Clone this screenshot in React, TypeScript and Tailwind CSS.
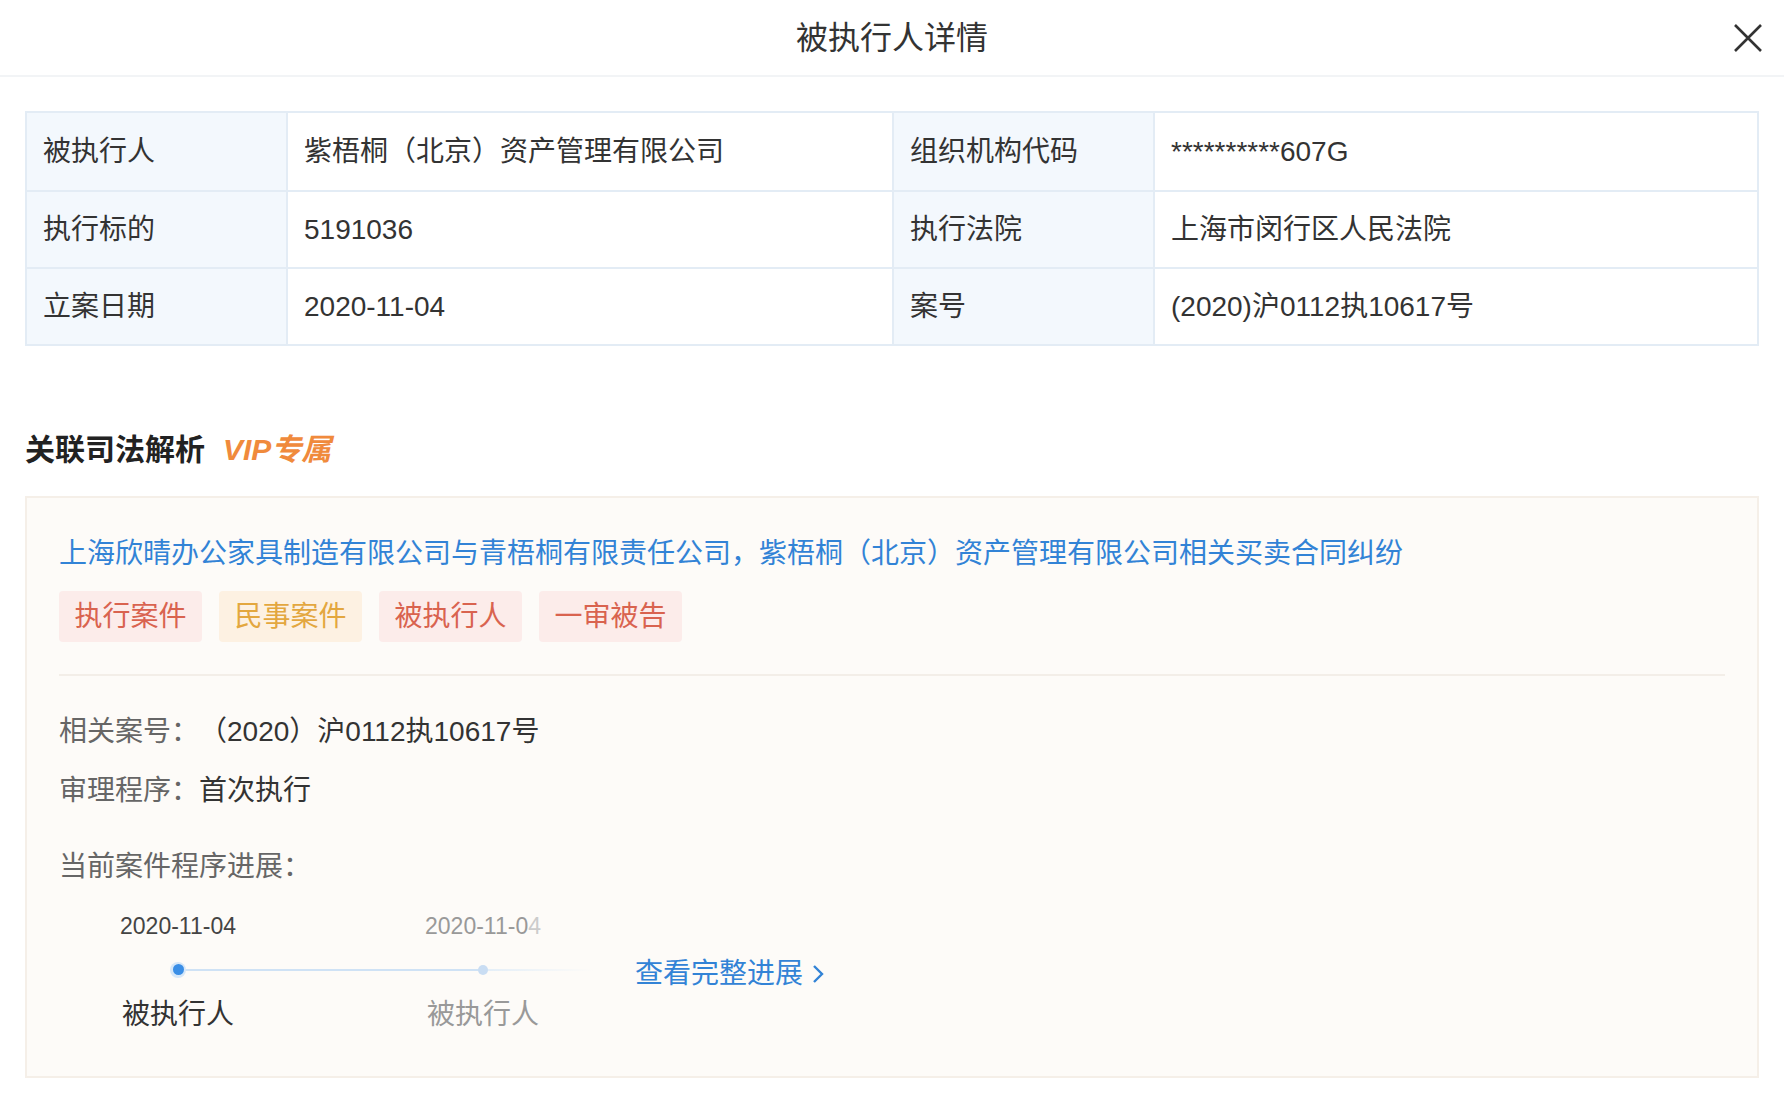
const font = { fontFamily: '"Liberation Sans", "Noto Sans CJK SC", sans-serif' }

const rows = [
  ['被执行人', '紫梧桐（北京）资产管理有限公司', '组织机构代码', '**********607G'],
  ['执行标的', '5191036', '执行法院', '上海市闵行区人民法院'],
  ['立案日期', '2020-11-04', '案号', '(2020)沪0112执10617号'],
]

const tags = [
  { t: '执行案件', c: 'text-[#d9634f] bg-[#fcecea]' },
  { t: '民事案件', c: 'text-[#e3a73f] bg-[#fdf1e2]' },
  { t: '被执行人', c: 'text-[#d9634f] bg-[#fcecea]' },
  { t: '一审被告', c: 'text-[#d9634f] bg-[#fcecea]' },
]

export default function App() {
  return (
    <div className="w-[1784px] h-[1100px] bg-white text-[#333] overflow-hidden" style={font}>
      {/* header */}
      <div className="relative h-[77px] border-b-2 border-[#f2f4f6] flex items-center justify-center">
        <span className="text-[32px] text-[#333]">被执行人详情</span>
        <svg className="absolute right-[20px] top-[22px]" width="32" height="32" viewBox="0 0 32 32">
          <path d="M3 3 L29 29 M29 3 L3 29" stroke="#333" strokeWidth="2.6" />
        </svg>
      </div>

      <div className="px-[25px]">
        {/* table */}
        <div className="mt-[34px] border-2 border-[#e3ecf5] text-[28px]">
          {rows.map((r, i) => (
            <div key={i} className={`grid grid-cols-[261px_606px_261px_1fr] h-[77px] ${i > 0 ? 'border-t-2 border-[#e3ecf5]' : ''}`}>
              <div className="bg-[#f3f8fd] flex items-center px-[16px] border-r-2 border-[#e3ecf5]">{r[0]}</div>
              <div className="flex items-center px-[16px] border-r-2 border-[#e3ecf5]">{r[1]}</div>
              <div className="bg-[#f3f8fd] flex items-center px-[16px] border-r-2 border-[#e3ecf5]">{r[2]}</div>
              <div className="flex items-center px-[16px]">{r[3]}</div>
            </div>
          ))}
        </div>

        {/* section title */}
        <div className="mt-[81px] flex items-center gap-[18px] h-[44px]">
          <span className="text-[30px] font-bold text-[#222]">关联司法解析</span>
          <span className="text-[30px] font-bold italic text-[#f08a3c]">VIP专属</span>
        </div>

        {/* card */}
        <div className="mt-[25px] h-[582px] bg-[#fdfbf8] border-2 border-[#f5efe8] px-[32px]">
          <div className="mt-[36px] text-[28px] text-[#3283d6] leading-[40px]">
            上海欣晴办公家具制造有限公司与青梧桐有限责任公司，紫梧桐（北京）资产管理有限公司相关买卖合同纠纷
          </div>
          <div className="mt-[17px] flex gap-[17px]">
            {tags.map(x => (
              <span key={x.t} className={`h-[51px] w-[143px] flex items-center justify-center rounded text-[28px] ${x.c}`}>{x.t}</span>
            ))}
          </div>
          <div className="mt-[32px] border-t-2 border-[#f3eee8]" />
          <div className="mt-[36px] text-[28px] leading-[40px] flex">
            <span className="text-[#666]">相关案号：</span><span className="text-[#333]">（2020）沪0112执10617号</span>
          </div>
          <div className="mt-[19px] text-[28px] leading-[40px] flex">
            <span className="text-[#666]">审理程序：</span><span className="text-[#333]">首次执行</span>
          </div>
          <div className="mt-[36px] text-[28px] leading-[40px] text-[#666]">当前案件程序进展：</div>

          {/* timeline */}
          <div className="mt-[22px] flex items-start">
            <div className="w-[576px] flex flex-col">
              <div className="flex text-[23px] text-[#444] pl-[19px] gap-[105px]">
                <span className="w-[200px] text-center">2020-11-04</span>
                <span className="w-[200px] text-center text-[#999]">2020-11-0<span className="text-[#ccc]">4</span></span>
              </div>
              <div className="relative h-[40px] mt-[6px]">
                <div className="absolute top-[19px] left-[119px] w-[305px] h-[2px] bg-[#cfe2f5]" />
                <div className="absolute top-[19px] left-[424px] w-[110px] h-[2px] bg-gradient-to-r from-[#e3eef8] to-transparent" />
                <div className="absolute top-[12px] left-[111px] w-[16px] h-[16px] rounded-full bg-[#d6e7f8] flex items-center justify-center">
                  <div className="w-[11px] h-[11px] rounded-full bg-[#3a8ee6]" />
                </div>
                <div className="absolute top-[15px] left-[419px] w-[10px] h-[10px] rounded-full bg-[#c9ddf3]" />
              </div>
              <div className="flex text-[28px] mt-[4px] pl-[19px] gap-[105px]">
                <span className="w-[200px] text-center text-[#333]">被执行人</span>
                <span className="w-[200px] text-center text-[#999]">被执行人</span>
              </div>
            </div>
            <div className="mt-[44px] flex items-center gap-[8px] text-[28px] text-[#3283d6]">
              查看完整进展
              <svg width="14" height="22" viewBox="0 0 14 22"><path d="M3 3 L11 11 L3 19" stroke="#3283d6" strokeWidth="2.4" fill="none" /></svg>
            </div>
          </div>
        </div>
      </div>
    </div>
  )
}
